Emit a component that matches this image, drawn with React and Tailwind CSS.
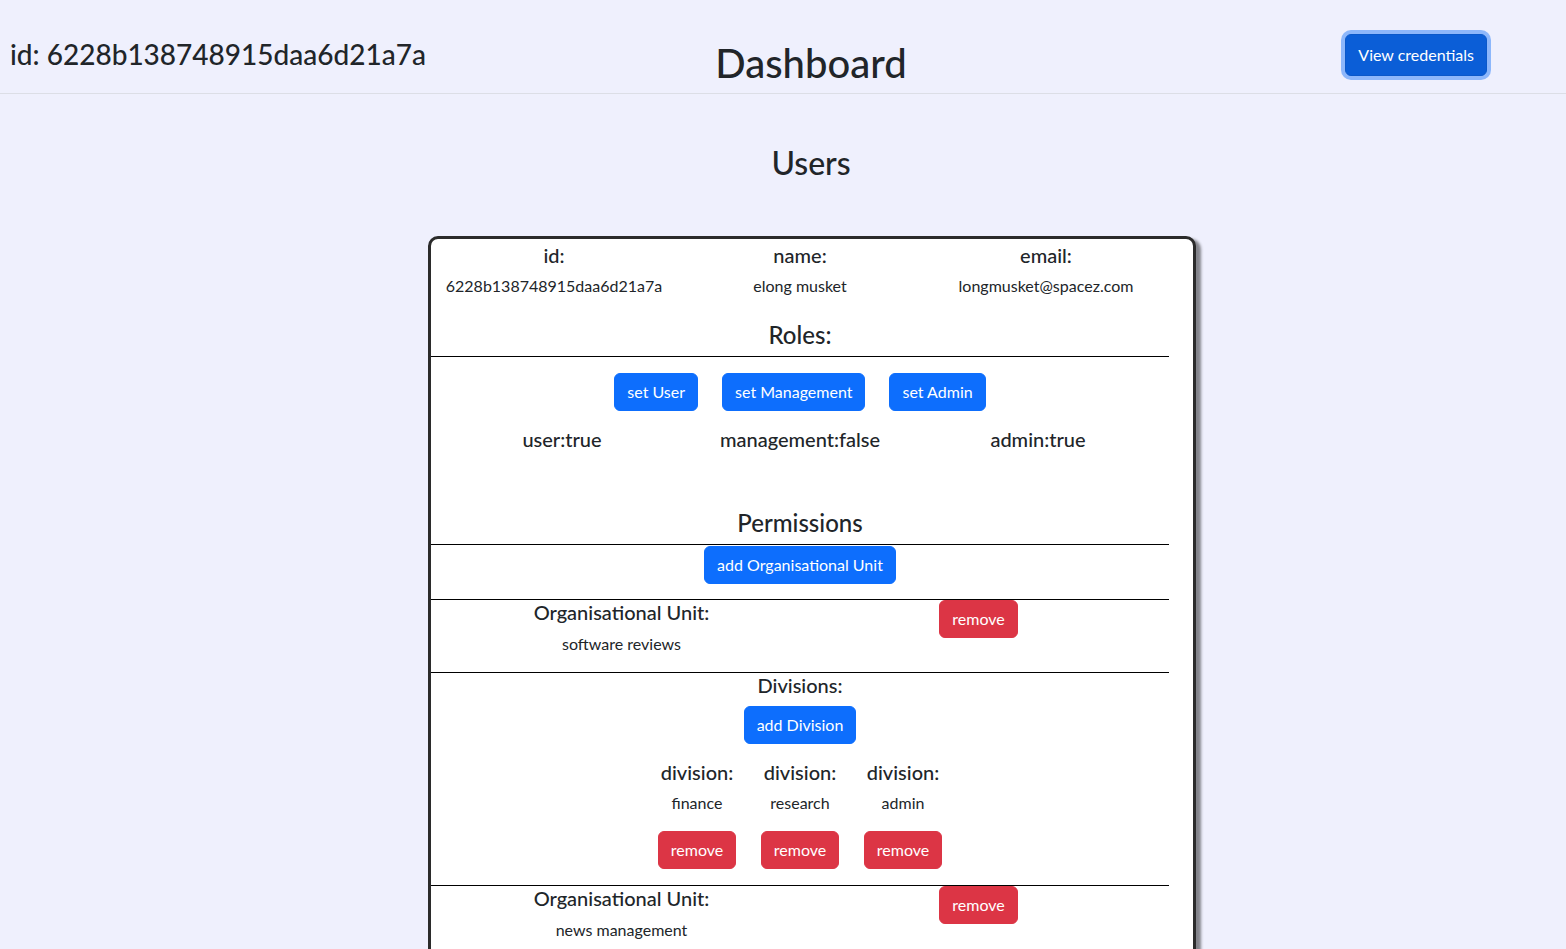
import React from "react";

const font = "font-['Lato','Noto_Sans',sans-serif]";

function Btn({ children, color = "blue", className = "" }) {
  const c =
    color === "red"
      ? "bg-[#dc3545] border-[#dc3545]"
      : "bg-[#0d6efd] border-[#0d6efd]";
  return (
    <button
      type="button"
      className={`${c} border text-white text-[16px] leading-[24px] px-3 py-[6px] rounded-[6px] ${className}`}
    >
      {children}
    </button>
  );
}

function Line() {
  return <div className="h-px bg-black w-[738px]" />;
}

function OrgUnit({ name }) {
  return (
    <div className="w-[714px] mx-auto grid grid-cols-2 items-start">
      <div className="flex flex-col items-center">
        <p className="text-[20px] font-medium leading-[24px]">Organisational Unit:</p>
        <p className="text-[16px] leading-[24px] mt-[8px]">{name}</p>
      </div>
      <div className="flex justify-center items-start">
        <Btn color="red">remove</Btn>
      </div>
    </div>
  );
}

export default function App() {
  const divisions = ["finance", "research", "admin"];
  return (
    <div className={`${font} min-h-screen bg-[#eff0fd] text-[#212529]`}>
      <header className="h-[94px] border-b border-[#dcdee6] flex items-start">
        <div className="w-[714px] pl-[10px] pt-[37px] shrink-0">
          <h3 className="text-[28px] leading-[34px] font-medium">id: 6228b138748915daa6d21a7a</h3>
        </div>
        <div className="w-[194px] flex justify-center pt-[39px]">
          <h1 className="text-[40px] leading-[48px] font-medium whitespace-nowrap">Dashboard</h1>
        </div>
        <div className="ml-auto mr-[79px] pt-[34px]">
          <button
            type="button"
            className="bg-[#0b5ed7] border border-[#0a58ca] text-white text-[16px] leading-[24px] px-3 py-[8px] rounded-[6px] ring-4 ring-[#8db7fb]"
          >
            View credentials
          </button>
        </div>
      </header>

      <h2 className="text-[32px] leading-[38px] font-medium text-center pl-[56px] mt-[50px]">Users</h2>

      <div className="mt-[54px] ml-[428px] w-[768px] bg-white border-[3px] border-[#2b2b2b] rounded-[10px] shadow-[5px_3px_3px_rgba(0,0,0,0.45)] pb-10">
        <div className="w-[738px]">
          <div className="grid grid-cols-3 pt-[4px]">
            {[
              ["id:", "6228b138748915daa6d21a7a"],
              ["name:", "elong musket"],
              ["email:", "longmusket@spacez.com"],
            ].map(([k, v]) => (
              <div key={k} className="flex flex-col items-center">
                <p className="text-[20px] font-medium leading-[24px]">{k}</p>
                <p className="text-[16px] leading-[24px] mt-[7px]">{v}</p>
              </div>
            ))}
          </div>
          <h4 className="text-center text-[24px] leading-[29px] font-medium mt-[22px]">Roles:</h4>
          <div className="mt-[7px]"><Line /></div>

          <div className="flex justify-center items-start gap-6 mt-[16px]">
            <Btn>set User</Btn>
            <Btn>set Management</Btn>
            <Btn>set Admin</Btn>
          </div>
          <div className="w-[714px] mx-auto grid grid-cols-3 mt-[16px]">
            {["user:true", "management:false", "admin:true"].map((t) => (
              <p key={t} className="text-center text-[20px] font-medium leading-[24px]">{t}</p>
            ))}
          </div>

          <h3 className="text-center text-[24px] leading-[29px] font-medium mt-[57px]">Permissions</h3>
          <div className="mt-[7px]"><Line /></div>
          <div className="flex justify-center items-start h-[54px] pt-[1px]">
            <Btn>add Organisational Unit</Btn>
          </div>
          <Line />
          <div className="h-[72px]">
            <OrgUnit name="software reviews" />
          </div>
          <Line />
          <div className="flex flex-col items-center h-[212px]">
            <p className="text-[20px] font-medium leading-[24px]">Divisions:</p>
            <Btn className="mt-[9px]">add Division</Btn>
            <div className="flex items-start gap-6 mt-[16px]">
              {divisions.map((d) => (
                <div key={d} className="flex flex-col items-center w-[79px]">
                  <p className="text-[20px] font-medium leading-[24px]">division:</p>
                  <p className="text-[16px] leading-[24px] mt-[7px]">{d}</p>
                  <Btn color="red" className="mt-[16px]">remove</Btn>
                </div>
              ))}
            </div>
          </div>
          <Line />
          <OrgUnit name="news management" />
        </div>
      </div>
    </div>
  );
}
